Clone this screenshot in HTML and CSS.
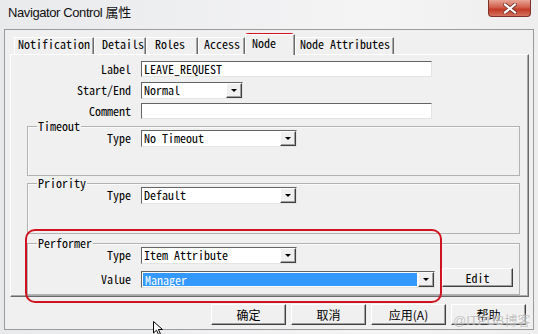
FILE: index.html
```html
<!DOCTYPE html>
<html lang="zh-CN">
<head>
    <meta charset="UTF-8">
    <title>Navigator Control 属性</title>
    <link rel="stylesheet" href="styles.css">
</head>
<body>
    <div class="window">
        <div class="titlebar">
            <span class="title">Navigator Control 属性</span>
            <span class="close">
                <svg width="14" height="11" viewBox="0 0 14 11">
                    <path d="M2 1.5 L12 9.5 M12 1.5 L2 9.5" stroke="#6b2a22" stroke-width="3.6" stroke-linecap="square"/>
                    <path d="M2 1.5 L12 9.5 M12 1.5 L2 9.5" stroke="#fff" stroke-width="2.2" stroke-linecap="square"/>
                </svg>
            </span>
        </div>

        <div class="client">
            <div class="tabs">
                <span class="tab tab-notification">Notification</span>
                <span class="tab tab-details">Details</span>
                <span class="tab tab-roles">Roles</span>
                <span class="tab tab-access">Access</span>
                <span class="tab tab-node active">Node</span>
                <span class="tab tab-attrs">Node Attributes</span>
            </div>

            <div class="panel">
                <div class="form">
                    <span class="lbl">Label</span>
                    <div class="field">LEAVE_REQUEST</div>
                    <span class="lbl">Start/End</span>
                    <div class="combo combo-small"><span class="val">Normal</span><span class="drop"></span></div>
                    <span class="lbl">Comment</span>
                    <div class="field"></div>
                </div>

                <div class="group group-timeout">
                    <span class="legend">Timeout</span>
                    <div class="group-rows">
                        <span class="lbl">Type</span>
                        <div class="combo combo-mid"><span class="val">No Timeout</span><span class="drop"></span></div>
                    </div>
                </div>

                <div class="group group-priority">
                    <span class="legend">Priority</span>
                    <div class="group-rows">
                        <span class="lbl">Type</span>
                        <div class="combo combo-mid"><span class="val">Default</span><span class="drop"></span></div>
                    </div>
                </div>

                <div class="group group-performer">
                    <span class="legend">Performer</span>
                    <div class="group-rows">
                        <span class="lbl">Type</span>
                        <div class="combo combo-mid"><span class="val">Item Attribute</span><span class="drop"></span></div>
                        <span></span>
                        <span class="lbl">Value</span>
                        <div class="combo combo-wide"><span class="val selected">Manager</span><span class="drop"></span></div>
                        <span class="btn btn-edit">Edit</span>
                    </div>
                </div>
            </div>

            <div class="actions">
                <span class="btn btn-cn">确定</span>
                <span class="btn btn-cn">取消</span>
                <span class="btn btn-cn">应用(A)</span>
                <span class="btn btn-cn">帮助</span>
            </div>
        </div>

        <!-- annotations drawn over the screenshot -->
        <div class="mark mark-tab"></div>
        <div class="mark mark-performer"></div>
        <div class="watermark">@ITPUB博客</div>
        <svg class="cursor" width="12" height="14" viewBox="0 0 12 14">
            <path d="M0.5 0.5 L0.5 12 L3.5 9.2 L5.6 13.5 L7.4 12.7 L5.4 8.5 L9.5 8.5 Z" fill="#fff" stroke="#000" stroke-width="1"/>
        </svg>
    </div>
</body>
</html>
```

FILE: styles.css
```css
body {
    margin: 0;
    font-family: "Noto Sans Mono CJK SC", "Liberation Mono", "Noto Sans CJK SC", monospace;
    font-size: 12px;
    color: #000;
}
.window {
    position: relative;
    width: 538px;
    height: 334px;
    overflow: hidden;
    background: linear-gradient(to right, #e9eaec, #f4f4f5 70%, #eeeeef);
}
.titlebar {
    display: flex;
    align-items: flex-start;
    height: 29px;
}
.title {
    margin: 2px 0 0 8px;
    font-family: "Liberation Sans", "Noto Sans CJK SC", sans-serif;
    font-size: 13px;
    letter-spacing: -0.4px;
    color: #111;
}
.close {
    display: flex;
    align-items: center;
    justify-content: center;
    margin-left: auto;
    margin-right: 7px;
    width: 43px;
    height: 17px;
    box-sizing: border-box;
    border: 1px solid #7d3128;
    border-top: none;
    border-radius: 0 0 4px 4px;
    background: linear-gradient(to bottom, #e8a596, #d2604e 45%, #c13a26 60%, #d4735f);
}
.client {
    margin: 0 4px 0 4px;
    height: 301px;
    box-sizing: border-box;
    border: 1px solid #9b9b9b;
    background: #f0f0f0;
}

/* tab strip */
.tabs {
    display: flex;
    align-items: flex-end;
    height: 24px;
    padding-left: 9px;
}
.tab {
    box-sizing: border-box;
    height: 17px;
    line-height: 12px;
    border-top: 1px solid #fff;
    border-left: 1px solid #fff;
    border-right: 1px solid #6a6a6a;
    box-shadow: inset -1px 0 0 #a8a8a8;
    white-space: nowrap;
}
.tab-notification { width: 80px; padding-left: 3px; }
.tab-details { width: 52px; padding-left: 7px; }
.tab-roles { width: 52px; padding-left: 8px; }
.tab-access { width: 47px; padding-left: 5px; }
.tab-node { width: 50px; padding-left: 6px; }
.tab-attrs { width: 99px; padding-left: 4px; }
.tab.active {
    position: relative;
    z-index: 1;
    height: 21px;
    margin-bottom: -1px;
    line-height: 15px;
    background: #f0f0f0;
}

/* tab page */
.panel {
    box-sizing: border-box;
    height: 243px;
    margin: 0 4px 0 5px;
    padding-top: 6px;
    border-top: 1px solid #fff;
    border-left: 1px solid #fff;
    border-right: 1px solid #6a6a6a;
    border-bottom: 1px solid #6a6a6a;
    box-shadow: inset -1px -1px 0 #a8a8a8;
}
.form {
    display: grid;
    grid-template-columns: 120px 291px;
    grid-auto-rows: 16px;
    column-gap: 10px;
    row-gap: 5px;
}
.lbl {
    text-align: right;
    line-height: 15px;
    white-space: nowrap;
}
.field,
.combo {
    box-sizing: border-box;
    height: 16px;
    border-top: 1px solid #646464;
    border-left: 1px solid #646464;
    border-right: 1px solid #e4e4e4;
    border-bottom: 1px solid #e4e4e4;
    background: #fff;
    line-height: 13px;
    padding-left: 2px;
    white-space: nowrap;
}
.combo {
    display: flex;
    height: 17px;
    padding: 0;
}
.combo .val {
    flex: 1;
    padding-left: 2px;
    line-height: 14px;
}
.combo .val.selected {
    margin: 1px;
    line-height: 13px;
    background: #3399ff;
    color: #fff;
}
.combo-small { width: 102px; }
.combo-mid { width: 156px; }
.combo-wide { width: 294px; }
.drop {
    position: relative;
    box-sizing: border-box;
    width: 16px;
    height: 15px;
    border-top: 1px solid #fff;
    border-left: 1px solid #fff;
    border-right: 1px solid #404040;
    border-bottom: 1px solid #404040;
    box-shadow: inset -1px -1px 0 #a0a0a0;
    background: #f0f0f0;
}
.drop::after {
    content: "";
    position: absolute;
    left: 4px;
    top: 5px;
    border-left: 3px solid transparent;
    border-right: 3px solid transparent;
    border-top: 3px solid #000;
}

/* group boxes */
.group {
    position: relative;
    box-sizing: border-box;
    margin: 7px 8px 0 16px;
    border: 1px solid #b2b2b2;
    box-shadow: inset 1px 1px 0 #fbfbfb;
}
.group-timeout { height: 50px; }
.group-priority { height: 51px; }
.group-performer { height: 52px; margin-top: 9px; }
.legend {
    position: absolute;
    top: -8px;
    left: 9px;
    padding: 0 1px;
    line-height: 14px;
    background: #f0f0f0;
}
.group-rows {
    display: grid;
    grid-template-columns: 103px auto 1fr;
    column-gap: 10px;
    row-gap: 7px;
    padding-top: 3px;
}
.group-timeout .group-rows,
.group-priority .group-rows {
    grid-template-columns: 103px auto;
}
.group-rows .lbl {
    line-height: 16px;
}

/* buttons */
.btn {
    display: flex;
    align-items: center;
    justify-content: center;
    box-sizing: border-box;
    border-top: 1px solid #fff;
    border-left: 1px solid #fff;
    border-right: 1px solid #404040;
    border-bottom: 1px solid #404040;
    box-shadow: inset -1px -1px 0 #a0a0a0;
    background: #f0f0f0;
}
.btn-edit {
    width: 71px;
    height: 19px;
    margin: -3px 0 0 -3px;
    justify-self: start;
}
.actions {
    display: flex;
    justify-content: flex-end;
    gap: 5px;
    margin-top: 7px;
    padding-right: 7px;
}
.btn-cn {
    width: 75px;
    height: 21px;
    font-family: "Noto Sans CJK SC", sans-serif;
    font-size: 12px;
}

/* red annotation frames, watermark, pointer */
.mark {
    position: absolute;
    box-sizing: border-box;
    border: 2px solid #d0131f;
}
.mark-tab {
    left: 245px;
    top: 33px;
    width: 49px;
    height: 20px;
    border-radius: 3px;
}
.mark-performer {
    left: 25px;
    top: 229px;
    width: 417px;
    height: 74px;
    border-width: 2.5px;
    border-radius: 10px;
}
.watermark {
    position: absolute;
    left: 453px;
    top: 310px;
    font-family: "Liberation Sans", "Noto Sans CJK SC", sans-serif;
    font-size: 13px;
    color: rgba(175, 175, 175, 0.75);
    text-shadow: 0 0 2px #fff;
}
.cursor {
    position: absolute;
    left: 153px;
    top: 321px;
}
```
